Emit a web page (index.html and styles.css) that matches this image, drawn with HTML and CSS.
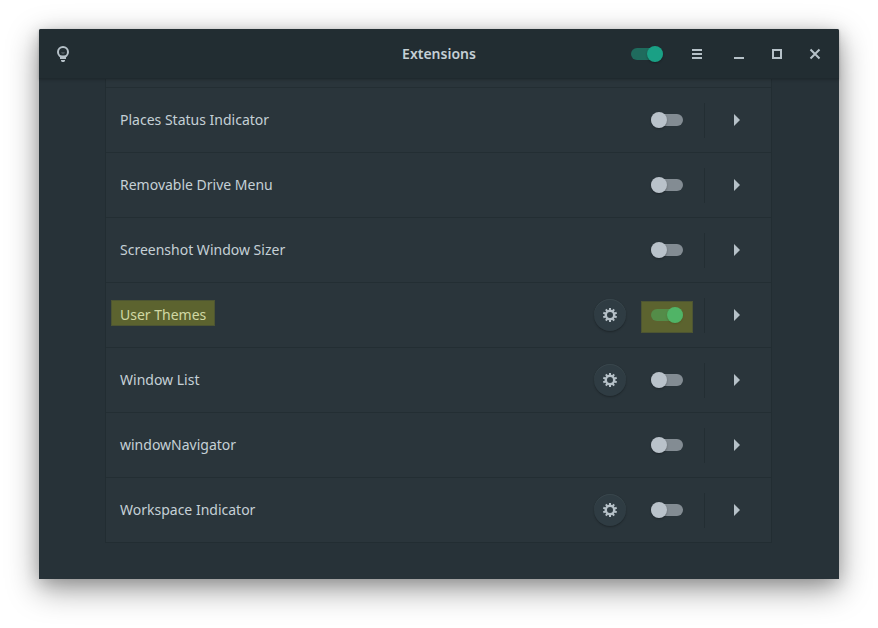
FILE: index.html
```html
<!DOCTYPE html>
<html lang="en">
<head>
<meta charset="utf-8">
<title>Extensions</title>
<link rel="stylesheet" href="styles.css">
</head>
<body>
<svg class="sprite" aria-hidden="true">
  <symbol id="gear" viewBox="0 0 16 16">
    <circle cx="8" cy="8" r="4.200" fill="none" stroke="currentColor" stroke-width="2.400"/>
    <path d="M8 4V1M8 12v3M10.600 4.400l1.500-2.100M5.400 4.400L3.900 2.300M10.600 11.600l1.500 2.100M5.400 11.600l-1.500 2.100M12.300 6.600l2.400-.8M3.700 6.600l-2.400-.8M12.300 9.400l2.400.8M3.700 9.400l-2.400.8" fill="none" stroke="currentColor" stroke-width="2"/>
  </symbol>
  <symbol id="arrow" viewBox="0 0 16 16">
    <path d="M5 2l6 6-6 6z" fill="currentColor"/>
  </symbol>
</svg>
<div class="window">
  <header class="titlebar">
    <div class="start">
      <button class="icon-button" aria-label="About">
        <svg viewBox="0 0 16 16"><circle cx="8" cy="6" r="5" fill="none" stroke="currentColor" stroke-width="2"/><path d="M6 6h4L9 8H7z" fill="currentColor" opacity=".25"/><path d="M4 9.500h8L11 11.500V13H5v-1.500zM6 14h4v1l-1 1H7l-1-1z" fill="currentColor"/></svg>
      </button>
    </div>
    <h1>Extensions</h1>
    <div class="end">
      <input type="checkbox" class="switch" aria-label="Enable extensions" checked>
      <button class="icon-button menu" aria-label="Menu"><svg viewBox="0 0 16 16"><path d="M3 3h10v2H3zM3 7h10v2H3zM3 11h10v2H3z" fill="currentColor"/></svg></button>
      <button class="icon-button" aria-label="Minimize"><svg viewBox="0 0 16 16"><path d="M3 11h10v2H3z" fill="currentColor"/></svg></button>
      <button class="icon-button" aria-label="Maximize"><svg viewBox="0 0 16 16"><path d="M4 4h8v8H4z" fill="none" stroke="currentColor" stroke-width="2"/></svg></button>
      <button class="icon-button" aria-label="Close"><svg viewBox="0 0 16 16"><path d="M3.500 3.500l9 9M12.500 3.500l-9 9" fill="none" stroke="currentColor" stroke-width="2"/></svg></button>
    </div>
  </header>
  <main>
    <ul class="list">
      <li class="scrolled"></li>
      <li class="row"><label for="places">Places Status Indicator</label><span class="toggle"><input type="checkbox" class="switch" id="places"></span><button class="expand" aria-label="Details"><svg><use href="#arrow"/></svg></button></li>
      <li class="row"><label for="drive">Removable Drive Menu</label><span class="toggle"><input type="checkbox" class="switch" id="drive"></span><button class="expand" aria-label="Details"><svg><use href="#arrow"/></svg></button></li>
      <li class="row"><label for="sizer">Screenshot Window Sizer</label><span class="toggle"><input type="checkbox" class="switch" id="sizer"></span><button class="expand" aria-label="Details"><svg><use href="#arrow"/></svg></button></li>
      <li class="row marked"><label for="themes">User Themes</label><button class="settings" aria-label="Settings"><svg><use href="#gear"/></svg></button><span class="toggle"><input type="checkbox" class="switch" id="themes" checked></span><button class="expand" aria-label="Details"><svg><use href="#arrow"/></svg></button></li>
      <li class="row"><label for="winlist">Window List</label><button class="settings" aria-label="Settings"><svg><use href="#gear"/></svg></button><span class="toggle"><input type="checkbox" class="switch" id="winlist"></span><button class="expand" aria-label="Details"><svg><use href="#arrow"/></svg></button></li>
      <li class="row"><label for="navigator">windowNavigator</label><span class="toggle"><input type="checkbox" class="switch" id="navigator"></span><button class="expand" aria-label="Details"><svg><use href="#arrow"/></svg></button></li>
      <li class="row"><label for="workspace">Workspace Indicator</label><button class="settings" aria-label="Settings"><svg><use href="#gear"/></svg></button><span class="toggle"><input type="checkbox" class="switch" id="workspace"></span><button class="expand" aria-label="Details"><svg><use href="#arrow"/></svg></button></li>
    </ul>
  </main>
</div>
</body>
</html>
```
FILE: styles.css
```css
* { box-sizing: border-box; }
body {
  margin: 0;
  padding: 29px 39px 49px;
  background: #fff;
  color: #c5d0d6;
  font: 14px/20px "Noto Sans", sans-serif;
}
.sprite { display: none; }
.window {
  background: #273238;
  border-radius: 2px 2px 0 0;
  box-shadow: 0 10px 32px rgba(0, 0, 0, .4), 0 4px 16px rgba(0, 0, 0, .16);
}
.titlebar {
  position: relative;
  display: grid;
  grid-template-columns: 1fr auto 1fr;
  align-items: center;
  height: 50px;
  padding: 0 12px;
  background: #222d32;
  border-bottom: 1px solid #1f292e;
  border-radius: 2px 2px 0 0;
  box-shadow: 0 1px 3px rgba(0, 0, 0, .2);
}
h1 { margin: 0; font-size: 14px; line-height: 20px; font-weight: 600; }
.start, .end { display: flex; align-items: center; }
.end { justify-content: flex-end; gap: 14px; }
button {
  display: flex;
  align-items: center;
  justify-content: center;
  padding: 0;
  border: 0;
  background: none;
  color: #b6c1c8;
}
button svg { width: 16px; height: 16px; }
.icon-button { width: 24px; height: 24px; }
.menu { margin: 0 4px 0 8px; }
.switch {
  appearance: none;
  display: flex;
  align-items: center;
  width: 32px;
  height: 12px;
  margin: 0;
  border-radius: 6px;
  background: #838c93;
}
.switch::before {
  content: "";
  width: 16px;
  height: 16px;
  flex: none;
  border-radius: 50%;
  background: #b9c2ca;
  box-shadow: 0 1px 2px rgba(0, 0, 0, .3);
}
.switch:checked { justify-content: flex-end; background: #1f6b5d; }
.switch:checked::before { background: #1aa085; }
main { padding: 0 67px 36px 66px; }
.list {
  margin: 0;
  padding: 0;
  list-style: none;
  background: #2a353b;
  border: 1px solid #222d32;
  border-top: 0;
}
.scrolled { height: 9px; border-bottom: 1px solid #232e33; }
.row {
  display: flex;
  align-items: center;
  height: 65px;
  padding: 0 18px 0 14px;
  border-bottom: 1px solid #232e33;
}
.row:last-child { height: 64px; border-bottom: 0; }
.row label { position: relative; margin-right: auto; }
.settings {
  width: 32px;
  height: 32px;
  margin-right: 25px;
  border-radius: 50%;
  background: #2f3c43;
  box-shadow: 0 1px 2px rgba(0, 0, 0, .3), inset 0 1px #39464c;
}
.toggle {
  position: relative;
  display: flex;
  align-items: center;
  height: 35px;
  margin-right: 16px;
  padding-right: 21px;
  border-right: 1px solid #232e33;
}
.expand { width: 32px; height: 32px; }
.marked label::after, .marked .toggle::after {
  content: "";
  position: absolute;
  background: rgba(242, 240, 10, .25);
  border: 1px solid rgba(42, 52, 58, .3);
  pointer-events: none;
}
.marked label::after { inset: -5px -9px -1px -9px; }
.marked .toggle::after { inset: 3px 11px 0 -10px; }
```
